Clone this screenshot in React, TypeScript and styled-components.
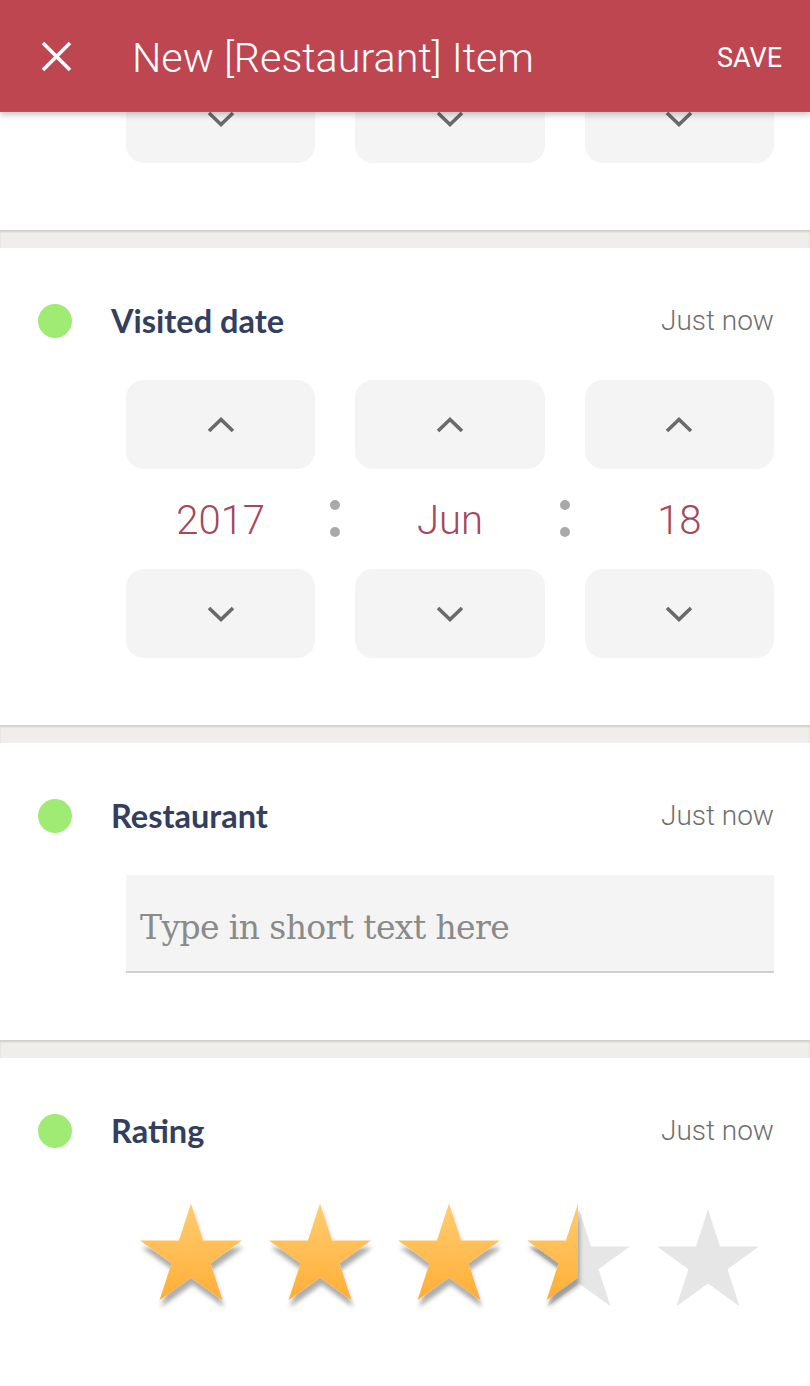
import React from "react";
import styled, { createGlobalStyle } from "styled-components";

const GlobalStyle = createGlobalStyle`
  html, body { margin: 0; padding: 0; background: #ffffff; }
  body { font-family: Roboto, "Noto Sans", sans-serif; -webkit-font-smoothing: antialiased; }
  * { box-sizing: border-box; }
`;

const Page = styled.div`
  width: 810px;
  height: 1386px;
  overflow: hidden;
  position: relative;
  background: #ffffff;
`;

const AppBar = styled.header`
  position: absolute;
  top: 0;
  left: 0;
  right: 0;
  height: 112px;
  background: #be4650;
  border-bottom: 1px solid #c84d57;
  box-shadow: 0 3px 6px rgba(0, 0, 0, 0.22);
  display: flex;
  align-items: center;
  padding: 0 28px 0 41px;
  z-index: 10;
`;

const CloseButton = styled.button`
  width: 31px;
  height: 31px;
  padding: 0;
  border: 0;
  background: transparent;
  display: flex;
  align-items: center;
  justify-content: center;
  margin-top: 1px;
`;

const AppTitle = styled.h1`
  margin: 6px 0 0 60px;
  flex: 1;
  font-family: Roboto, sans-serif;
  font-weight: 300;
  font-size: 41.3px;
  color: #ffffff;
  letter-spacing: 0;
  line-height: 1;
`;

const SaveButton = styled.button`
  border: 0;
  background: transparent;
  padding: 0;
  margin-top: 6px;
  font-family: Roboto, sans-serif;
  font-weight: 400;
  font-size: 27px;
  color: #ffffff;
  line-height: 1;
`;

const Feed = styled.main`
  display: flex;
  flex-direction: column;
`;

const Card = styled.section<{ $top?: number }>`
  background: #ffffff;
  padding: ${(p) => p.$top ?? 56}px 36px 67px 0;
  display: flex;
  flex-direction: column;
`;

const Separator = styled.div`
  height: 18px;
  background: #efeeeb;
  box-shadow: inset 0 2px 2px rgba(0, 0, 0, 0.13);
`;

const FieldHeader = styled.div`
  height: 34px;
  display: flex;
  align-items: center;
  padding-left: 38px;
`;

const StatusDot = styled.span`
  width: 34px;
  height: 34px;
  border-radius: 50%;
  background: #a0eb74;
  flex: none;
`;

const FieldTitle = styled.h2`
  margin: 1px 0 0 39px;
  flex: 1;
  font-family: Lato, "Noto Sans", sans-serif;
  font-weight: 700;
  font-size: 32.5px;
  color: #343e5e;
  line-height: 1;
`;

const Timestamp = styled.span`
  font-family: Roboto, sans-serif;
  font-weight: 300;
  font-size: 28px;
  color: #6f6f6f;
  line-height: 1;
`;

const Body = styled.div<{ $gap?: number }>`
  margin-top: ${(p) => p.$gap ?? 42}px;
  padding-left: 126px;
`;

const PickerGrid = styled.div`
  display: grid;
  grid-template-columns: 1fr 40px 1fr 40px 1fr;
  grid-template-rows: 89px 100px 89px;
  align-items: center;
`;

const StepButton = styled.button`
  height: 89px;
  border: 0;
  border-radius: 18px;
  background: #f3f4f3;
  display: flex;
  align-items: center;
  justify-content: center;
  padding: 0;
`;

const Value = styled.div`
  text-align: center;
  font-family: Roboto, sans-serif;
  font-weight: 300;
  font-size: 40px;
  color: #a6485a;
  line-height: 1;
  margin-top: 3px;
`;

const Colon = styled.div`
  display: flex;
  flex-direction: column;
  align-items: center;
  gap: 17px;
  margin-top: -1px;
`;

const ColonDot = styled.span`
  width: 10px;
  height: 10px;
  border-radius: 50%;
  background: #a9a9a9;
`;

const Spacer = styled.div``;

const TextField = styled.div`
  height: 98px;
  background: #f3f4f3;
  border-bottom: 2px solid #cdd0d3;
  display: flex;
  align-items: center;
  padding: 8px 14px 0;
`;

const Placeholder = styled.span`
  font-family: "DejaVu Serif", "Liberation Serif", serif;
  font-size: 33px;
  letter-spacing: -0.6px;
  color: #8a8a8a;
`;

const StarRow = styled.div`
  display: flex;
  justify-content: center;
  gap: 27px;
  padding-right: 2px;
`;

const StarBox = styled.svg`
  width: 102px;
  height: 106px;
  overflow: visible;
  display: block;
`;

const Chevron = ({ dir }: { dir: "up" | "down" }) => (
  <svg width="28" height="18" viewBox="0 0 28 18">
    <polyline
      points={dir === "up" ? "2,15 14,3.5 26,15" : "2,3 14,14.5 26,3"}
      fill="none"
      stroke="#6a6a6a"
      strokeWidth="3.6"
      strokeLinejoin="miter"
    />
  </svg>
);

const CloseIcon = () => (
  <svg width="31" height="31" viewBox="0 0 31 31">
    <path d="M2 2 L29 29 M29 2 L2 29" stroke="#ffffff" strokeWidth="3.6" fill="none" />
  </svg>
);

const starPoints = (() => {
  const cx = 51;
  const cy = 54;
  const R = 53.6;
  const r = 20.5;
  const pts: string[] = [];
  for (let i = 0; i < 10; i++) {
    const a = (Math.PI / 5) * i;
    const rad = i % 2 === 0 ? R : r;
    pts.push(`${(cx + rad * Math.sin(a)).toFixed(2)},${(cy - rad * Math.cos(a)).toFixed(2)}`);
  }
  return pts.join(" ");
})();

const Star = ({ fill, id }: { fill: number; id: string }) => (
  <StarBox viewBox="0 0 102 106">
    <defs>
      <linearGradient id={`g-${id}`} x1="0" y1="0" x2="0" y2="1">
        <stop offset="0" stopColor="#ffcd72" />
        <stop offset="1" stopColor="#ffae35" />
      </linearGradient>
      <clipPath id={`c-${id}`}>
        <rect x="0" y="-5" width={102 * fill} height="120" />
      </clipPath>
      <filter id={`s-${id}`} x="-20%" y="-20%" width="150%" height="150%">
        <feDropShadow dx="1.5" dy="7" stdDeviation="2" floodColor="#000" floodOpacity="0.32" />
      </filter>
    </defs>
    {fill < 1 && <polygon points={starPoints} fill="#e6e6e6" transform="translate(1 6)" />}
    {fill > 0 && (
      <g filter={`url(#s-${id})`}>
        <polygon points={starPoints} fill={`url(#g-${id})`} clipPath={`url(#c-${id})`} />
      </g>
    )}
  </StarBox>
);

const DatePicker = ({ values }: { values: string[] }) => (
  <PickerGrid>
    {values.map((_, i) => (
      <React.Fragment key={`u${i}`}>
        <StepButton aria-label="increase">
          <Chevron dir="up" />
        </StepButton>
        {i < 2 && <Spacer />}
      </React.Fragment>
    ))}
    {values.map((v, i) => (
      <React.Fragment key={`v${i}`}>
        <Value>{v}</Value>
        {i < 2 && (
          <Colon>
            <ColonDot />
            <ColonDot />
          </Colon>
        )}
      </React.Fragment>
    ))}
    {values.map((_, i) => (
      <React.Fragment key={`d${i}`}>
        <StepButton aria-label="decrease">
          <Chevron dir="down" />
        </StepButton>
        {i < 2 && <Spacer />}
      </React.Fragment>
    ))}
  </PickerGrid>
);

const PartialPicker = styled.div`
  display: grid;
  grid-template-columns: 1fr 40px 1fr 40px 1fr;
  padding-left: 126px;
`;

const FieldHead = ({ title }: { title: string }) => (
  <FieldHeader>
    <StatusDot />
    <FieldTitle>{title}</FieldTitle>
    <Timestamp>Just now</Timestamp>
  </FieldHeader>
);

export default function App() {
  const rating = [1, 1, 1, 0.5, 0];
  return (
    <Page>
      <GlobalStyle />
      <AppBar>
        <CloseButton aria-label="close">
          <CloseIcon />
        </CloseButton>
        <AppTitle>New [Restaurant] Item</AppTitle>
        <SaveButton>SAVE</SaveButton>
      </AppBar>
      <Feed>
        <Card $top={74}>
          <PartialPicker>
            {[0, 1, 2].map((i) => (
              <React.Fragment key={i}>
                <StepButton aria-label="decrease">
                  <Chevron dir="down" />
                </StepButton>
                {i < 2 && <Spacer />}
              </React.Fragment>
            ))}
          </PartialPicker>
        </Card>
        <Separator />
        <Card>
          <FieldHead title="Visited date" />
          <Body>
            <DatePicker values={["2017", "Jun", "18"]} />
          </Body>
        </Card>
        <Separator />
        <Card>
          <FieldHead title="Restaurant" />
          <Body>
            <TextField>
              <Placeholder>Type in short text here</Placeholder>
            </TextField>
          </Body>
        </Card>
        <Separator />
        <Card>
          <FieldHead title="Rating" />
          <Body $gap={55}>
            <StarRow>
              {rating.map((f, i) => (
                <Star key={i} fill={f} id={`st${i}`} />
              ))}
            </StarRow>
          </Body>
        </Card>
      </Feed>
    </Page>
  );
}
